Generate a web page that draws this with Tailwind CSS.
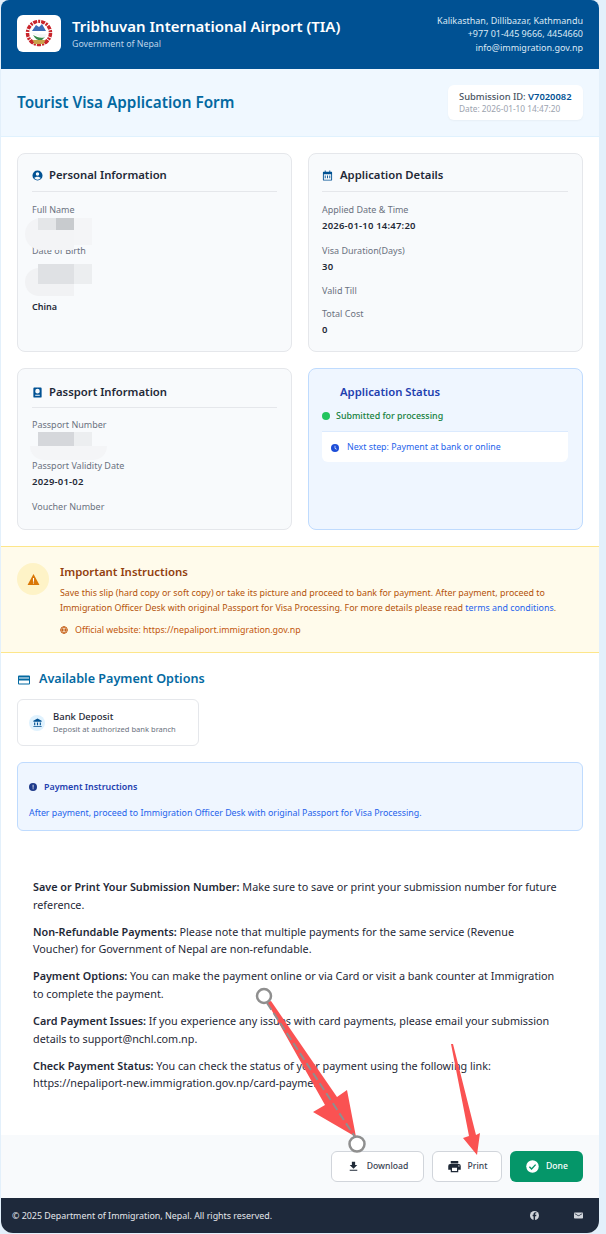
<!DOCTYPE html>
<html><head><meta charset="utf-8"><script src="https://cdn.jsdelivr.net/npm/@tailwindcss/browser@4"></script></head>
<body class="bg-[#e3f0fb] font-['Noto_Sans',sans-serif]">
<div class="relative w-[606px] h-[1234px] overflow-hidden">
<div class="ml-px w-[598px] h-[1233px] bg-white rounded-b-xl rounded-t-lg overflow-hidden flex flex-col">
  <header class="h-[69px] shrink-0 bg-[#005193] flex items-center justify-between pl-[16px] pr-[16px] pb-[3px]">
    <div class="flex items-center gap-[11px]">
      <div class="w-[44px] h-[37px] bg-white rounded-md flex items-center justify-center">
        <svg width="28" height="28" viewBox="0 0 28 28"><circle cx="14" cy="14" r="11.5" fill="none" stroke="#c8242b" stroke-width="3.500" stroke-dasharray="4 1 2 1"/><circle cx="14" cy="11" r="7" fill="#fff"/><path d="M7 12l4-6 3 2 3-3 4 7z" fill="#3b6cb7"/><path d="M6 13c4 1 8 3 16 2l-2 3c-5 1-10-2-14-5z" fill="#f4f6f8"/><path d="M8 16c4 2 8 4 12 2l-3 3c-3 1-6 0-9-5z" fill="#3a8a4a"/><path d="M7 21h14l-2 4H9z" fill="#c9a24a"/><path d="M4 22l3-2 2 4-2 1zM24 22l-3-2-2 4 2 1z" fill="#c8242b"/></svg>
      </div>
      <div class="leading-none">
        <div class="text-white text-[15px] font-semibold leading-[20px] mb-[2px]">Tribhuvan International Airport (TIA)</div>
        <div class="text-[#bcd3e8] text-[8.800px] leading-[12px]">Government of Nepal</div>
      </div>
    </div>
    <div class="mt-[2px] text-right text-[#dbe8f3] text-[9px] leading-[13.500px]">
      <div>Kalikasthan, Dillibazar, Kathmandu</div>
      <div>+977 01-445 9666, 4454660</div>
      <div>info@immigration.gov.np</div>
    </div>
  </header>

  <div class="h-[68px] shrink-0 bg-[#f0f8ff] border-b border-[#e0f2fe] flex items-center justify-between pl-[16px] pr-[16px]">
    <h1 class="text-[#0369a1] text-[15.300px] font-semibold">Tourist Visa Application Form</h1>
    <div class="w-[135px] h-[35px] bg-white rounded-md shadow-[0_1px_2px_rgba(0,0,0,0.04)] pl-[11px] pt-[5px]">
      <div class="text-[9.400px] leading-[13px] font-medium text-[#4b5563]">Submission ID: <span class="text-[#005193] font-semibold">V7020082</span></div>
      <div class="text-[8.300px] leading-[11px] text-[#9ca3af]">Date: 2026-01-10 14:47:20</div>
    </div>
  </div>

  <div class="grid grid-cols-2 gap-x-[16px] gap-y-[16px] px-[16px] pt-[16px] pb-[16px] shrink-0 grid-rows-[199px_162px]">
    <section class="border border-[#e5e7eb] rounded-lg bg-[#f8fafc] px-[14px] pt-[13px]">
      <div class="flex items-center gap-[6px] h-[16px] border-b border-[#e5e7eb] pb-[8px] box-content">
        <svg width="11" height="11" viewBox="0 0 24 24" fill="#005193"><path fill-rule="evenodd" d="M12 1a11 11 0 100 22 11 11 0 000-22zm0 4a3.800 3.800 0 110 7.600A3.800 3.800 0 0112 5zm0 16a9 9 0 01-7-3.300c.9-2 4-3.200 7-3.200s6.100 1.200 7 3.200A9 9 0 0112 21z"/></svg>
        <h2 class="text-[#1f2937] text-[11.300px] font-semibold">Personal Information</h2>
      </div>
      <div class="mt-[12px] text-[9px] leading-[12px] text-[#6b7280]">Full Name</div>
      <div class="h-[29px]"></div>
      <div class="text-[9px] leading-[12px] text-[#6b7280]">Date of Birth</div>
      <div class="h-[28px]"></div>
      <div class="h-[12px]"></div>
      <div class="mt-[4px] text-[9px] leading-[12px] font-semibold text-[#1f2937]">China</div>
    </section>

    <section class="border border-[#e5e7eb] rounded-lg bg-[#f8fafc] pl-[13px] pr-[14px] pt-[13px]">
      <div class="flex items-center gap-[7px] h-[16px] border-b border-[#e5e7eb] pb-[8px] box-content">
        <svg width="11" height="11" viewBox="0 0 24 24" fill="#005193"><path fill-rule="evenodd" d="M6 1h2v3h8V1h2v3h3a1 1 0 011 1v17a1 1 0 01-1 1H3a1 1 0 01-1-1V5a1 1 0 011-1h3zM4 9v12h16V9zm2 3h2v6H6zm5 0h2v6h-2zm5 0h2v6h-2z"/></svg>
        <h2 class="text-[#1f2937] text-[11.300px] font-semibold">Application Details</h2>
      </div>
      <div class="mt-[12px] text-[9px] leading-[12px] text-[#6b7280]">Applied Date &amp; Time</div>
      <div class="mt-[4px] text-[9.500px] tracking-[0.2px] leading-[12px] font-semibold text-[#1f2937]">2026-01-10 14:47:20</div>
      <div class="mt-[13px] text-[9px] leading-[12px] text-[#6b7280]">Visa Duration(Days)</div>
      <div class="mt-[4px] text-[9.500px] tracking-[0.2px] leading-[12px] font-semibold text-[#1f2937]">30</div>
      <div class="mt-[12px] text-[9px] leading-[12px] text-[#6b7280]">Valid Till</div>
      <div class="mt-[11px] text-[9px] leading-[12px] text-[#6b7280]">Total Cost</div>
      <div class="mt-[4px] text-[9.500px] tracking-[0.2px] leading-[12px] font-semibold text-[#1f2937]">0</div>
    </section>

    <section class="border border-[#e5e7eb] rounded-lg bg-[#f8fafc] px-[14px] pt-[15px]">
      <div class="flex items-center gap-[6px] h-[16px] border-b border-[#e5e7eb] pb-[7px] box-content">
        <svg width="11" height="11" viewBox="0 0 24 24" fill="#005193"><path fill-rule="evenodd" d="M5 1h14a2 2 0 012 2v18a2 2 0 01-2 2H5a2 2 0 01-2-2V3a2 2 0 012-2zm7 3a5 5 0 100 10 5 5 0 000-10zM7 17v2h10v-2z"/></svg>
        <h2 class="text-[#1f2937] text-[11.300px] font-semibold">Passport Information</h2>
      </div>
      <div class="mt-[11px] text-[9px] leading-[12px] text-[#6b7280]">Passport Number</div>
      <div class="h-[29px]"></div>
      <div class="text-[9px] leading-[12px] text-[#6b7280]">Passport Validity Date</div>
      <div class="mt-[4px] text-[9.500px] tracking-[0.2px] leading-[12px] font-semibold text-[#1f2937]">2029-01-02</div>
      <div class="mt-[13px] text-[9px] leading-[12px] text-[#6b7280]">Voucher Number</div>
    </section>

    <section class="border border-[#bfdbfe] rounded-lg bg-[#eff6ff] pl-[13px] pr-[14px] pt-[15px]">
      <div class="pl-[18px] h-[16px] flex items-center"><h2 class="text-[#1e40af] text-[11.300px] font-semibold">Application Status</h2></div>
      <div class="mt-[8px] flex items-center gap-[6px] h-[16px]">
        <span class="w-2 h-2 rounded-full bg-[#22c55e]"></span>
        <span class="text-[#15803d] text-[8.900px] font-medium">Submitted for processing</span>
      </div>
      <div class="mt-[7px] h-[31px] pt-px bg-white border-t border-[#dbeafe] rounded-b-md flex items-center pl-[9px] gap-[8px]">
        <svg width="8" height="8" viewBox="0 0 24 24" fill="#1d4ed8"><circle cx="12" cy="12" r="12"/><path d="M11 5h2v7l4 3-1 2-5-4z" fill="#fff"/></svg>
        <span class="text-[#2563eb] text-[8.850px]">Next step: Payment at bank or online</span>
      </div>
    </section>
  </div>

  <div class="h-[107px] shrink-0 bg-[#fffbeb] border-y border-[#fde68a] pl-[16px] pr-[15px] pt-[16px] flex gap-[11px]">
    <div class="w-[32px] h-[32px] rounded-full bg-[#fef3c7] flex items-center justify-center shrink-0">
      <svg width="13" height="13" viewBox="0 0 24 24"><path d="M12 2L1 22h22z" fill="#d97706"/><path d="M11 9h2v7h-2zM11 17.500h2v2h-2z" fill="#fff"/></svg>
    </div>
    <div class="min-w-0">
      <h3 class="text-[#92400e] text-[11.400px] font-semibold leading-[16px] mt-px">Important Instructions</h3>
      <p class="text-[#b45309] text-[8.900px] leading-[14.500px] mt-[6px] whitespace-nowrap">Save this slip (hard copy or soft copy) or take its picture and proceed to bank for payment. After payment, proceed to<br>Immigration Officer Desk with original Passport for Visa Processing. For more details please read <span class="text-[#2563eb]">terms and conditions</span>.</p>
      <div class="flex items-center gap-[6px] mt-[8.500px] text-[#c2570c] text-[8.850px]">
        <svg width="8" height="8" viewBox="0 0 24 24" fill="none" stroke="#c2570c" stroke-width="3"><circle cx="12" cy="12" r="10"/><path d="M2 12h20M12 2c-6 6-6 14 0 20M12 2c6 6 6 14 0 20"/></svg>
        <span class="ml-[1px]">Official website: https://nepaliport.immigration.gov.np</span>
      </div>
    </div>
  </div>

  <div class="px-[16px] shrink-0">
    <div class="flex items-center gap-[9px] mt-[18px] h-[17px] pl-[1px]">
      <svg width="12" height="12" viewBox="0 0 24 24" fill="#0369a1"><path fill-rule="evenodd" d="M2 3h20a2 2 0 012 2v14a2 2 0 01-2 2H2a2 2 0 01-2-2V5a2 2 0 012-2zm0 4v2h20V7zm0 6v6h20v-6z"/></svg>
      <h2 class="text-[#0369a1] text-[12.600px] font-semibold">Available Payment Options</h2>
    </div>
    <div class="mt-[11px] w-[182px] h-[47px] border border-[#e5e7eb] rounded-md bg-white flex items-center pl-[11px] gap-[8px]">
      <div class="w-4 h-4 rounded-full bg-[#e0f2fe] flex items-center justify-center">
        <svg width="9" height="9" viewBox="0 0 24 24" fill="#005193"><path d="M12 1L1 7v3h22V7zM3 12h3v7H3zm7.500 0h3v7h-3zM18 12h3v7h-3zM1 21h22v2H1z"/></svg>
      </div>
      <div>
        <div class="text-[#1f2937] text-[9.500px] leading-[12px] font-medium">Bank Deposit</div>
        <div class="text-[#6b7280] text-[7.550px] leading-[12px]">Deposit at authorized bank branch</div>
      </div>
    </div>
    <div class="mt-[16px] h-[69px] border border-[#bfdbfe] rounded-md bg-[#eff6ff] pl-[11px] pt-[17px]">
      <div class="flex items-center gap-[7px] h-[13px]">
        <svg width="8" height="8" viewBox="0 0 24 24" fill="#1e3a8a"><circle cx="12" cy="12" r="12"/><path d="M11 5h2.500v9H11zM11 16h2.500v3H11z" fill="#fff"/></svg>
        <span class="text-[#1e40af] text-[8.900px] font-semibold">Payment Instructions</span>
      </div>
      <p class="text-[#2563eb] text-[8.850px] leading-[12px] mt-[14px]">After payment, proceed to Immigration Officer Desk with original Passport for Visa Processing.</p>
    </div>
  </div>

  <div class="pl-[32px] pr-[30px] pt-[47px] flex-1 text-[#1f2937] text-[10.800px] leading-[17.500px] whitespace-nowrap">
    <p class="mb-[9.700px]"><b class="font-semibold">Save or Print Your Submission Number:</b> Make sure to save or print your submission number for future<br>reference.</p>
    <p class="mb-[9.700px]"><b class="font-semibold">Non-Refundable Payments:</b> Please note that multiple payments for the same service (Revenue<br>Voucher) for Government of Nepal are non-refundable.</p>
    <p class="mb-[9.700px]"><b class="font-semibold">Payment Options:</b> You can make the payment online or via Card or visit a bank counter at Immigration<br>to complete the payment.</p>
    <p class="mb-[9.700px]"><b class="font-semibold">Card Payment Issues:</b> If you experience any issues with card payments, please email your submission<br>details to support@nchl.com.np.</p>
    <p><b class="font-semibold">Check Payment Status:</b> You can check the status of your payment using the following link:<br>https://nepaliport-new.immigration.gov.np/card-payment</p>
  </div>

  <div class="h-[63px] shrink-0 bg-[#f8fafc] flex items-start justify-end gap-[8px] pt-[16px] pr-[16px]">
    <button class="w-[93px] h-[31px] bg-white border border-[#d1d5db] rounded-md flex items-center justify-center gap-[7px] text-[#374151] text-[8.600px] font-medium">
      <svg width="13" height="13" viewBox="0 0 24 24" fill="#1f2937"><path d="M19 9h-4V3H9v6H5l7 7zM5 18v2h14v-2z"/></svg>Download</button>
    <button class="w-[70px] h-[31px] bg-white border border-[#d1d5db] rounded-md flex items-center justify-center gap-[6px] text-[#374151] text-[8.600px] font-medium">
      <svg width="15" height="15" viewBox="0 0 24 24" fill="#1f2937"><path d="M19 8H5a3 3 0 00-3 3v6h4v4h12v-4h4v-6a3 3 0 00-3-3zm-3 11H8v-5h8zm3-7a1 1 0 110-2 1 1 0 010 2zM18 3H6v4h12z"/></svg>Print</button>
    <button class="w-[73px] h-[31px] bg-[#059669] rounded-md flex items-center justify-center gap-[6px] text-white text-[8.600px] font-medium">
      <svg width="15" height="15" viewBox="0 0 24 24"><circle cx="12" cy="12" r="10" fill="#fff"/><path d="M7 12.500l3.500 3.500L17 9" fill="none" stroke="#059669" stroke-width="2.200"/></svg>Done</button>
  </div>

  <footer class="h-[35px] shrink-0 bg-[#1e293b] flex items-center justify-between pl-[11px] pr-[16px] text-[#e5e7eb] text-[8.900px]">
    <span>© 2025 Department of Immigration, Nepal. All rights reserved.</span>
    <div class="flex items-center gap-[35px]">
      <svg width="9" height="9" viewBox="0 0 24 24"><circle cx="12" cy="12" r="12" fill="#d1d5db"/><path d="M13.500 24V14h3l.5-4h-3.500V8c0-1 .5-2 2-2H17V3h-3c-3 0-4.500 2-4.500 4.500V10H7v4h2.500v10z" fill="#1e293b"/></svg>
      <svg width="9" height="9" viewBox="0 0 24 24" fill="#d1d5db"><path fill-rule="evenodd" d="M2 4h20a2 2 0 012 2v12a2 2 0 01-2 2H2a2 2 0 01-2-2V6a2 2 0 012-2zm0 4l10 6 10-6V6L12 12 2 6z"/></svg>
    </div>
  </footer>
</div>

<!-- privacy blur patches over the source screenshot -->
<div class="absolute left-[25px] top-[218px] w-[49px] h-[32px] bg-[#f3f4f6] rounded-l-2xl"></div>
<div class="absolute left-[74px] top-[218px] w-[18px] h-[27px] bg-[#f4f5f7]"></div>
<div class="absolute left-[38px] top-[218px] w-[18px] h-[12px] bg-[#e4e6e8]"></div>
<div class="absolute left-[56px] top-[218px] w-[18px] h-[12px] bg-[#c8cbce]"></div>
<div class="absolute left-[25px] top-[268px] w-[49px] h-[28px] bg-[#f1f2f4] rounded-l-2xl"></div>
<div class="absolute left-[38px] top-[264px] w-[36px] h-[20px] bg-[#dfe1e4]"></div>
<div class="absolute left-[74px] top-[264px] w-[18px] h-[20px] bg-[#eceef0]"></div>
<div class="absolute left-[38px] top-[432px] w-[36px] h-[14px] bg-[#d5d7db]"></div>
<div class="absolute left-[74px] top-[432px] w-[18px] h-[14px] bg-[#eceef0]"></div>
<div class="absolute left-[30px] top-[446px] w-[77px] h-[14px] bg-[#f4f5f7] rounded-b-2xl"></div>

<!-- hand-drawn annotations from the source screenshot -->
<svg class="absolute left-0 top-0 pointer-events-none" width="606" height="1234" viewBox="0 0 606 1234">
  <path d="M267 1002L271 1001L337 1097L347 1090L356 1137L313 1112L325 1105z" fill="#fa5252"/>
  <path d="M267 1003L355 1137" stroke="#8f8f8f" stroke-width="2" stroke-dasharray="8 4"/>
  <circle cx="264" cy="996" r="7" fill="#fff" stroke="#8f8f8f" stroke-width="2.500"/>
  <circle cx="357" cy="1144" r="7.500" fill="#fff" stroke="#8f8f8f" stroke-width="2.500"/>
  <path d="M451 1044L453 1044L476 1135L480 1133L477 1155L463 1138L469 1136z" fill="#fa5252"/>
</svg>
</div>
</body></html>
